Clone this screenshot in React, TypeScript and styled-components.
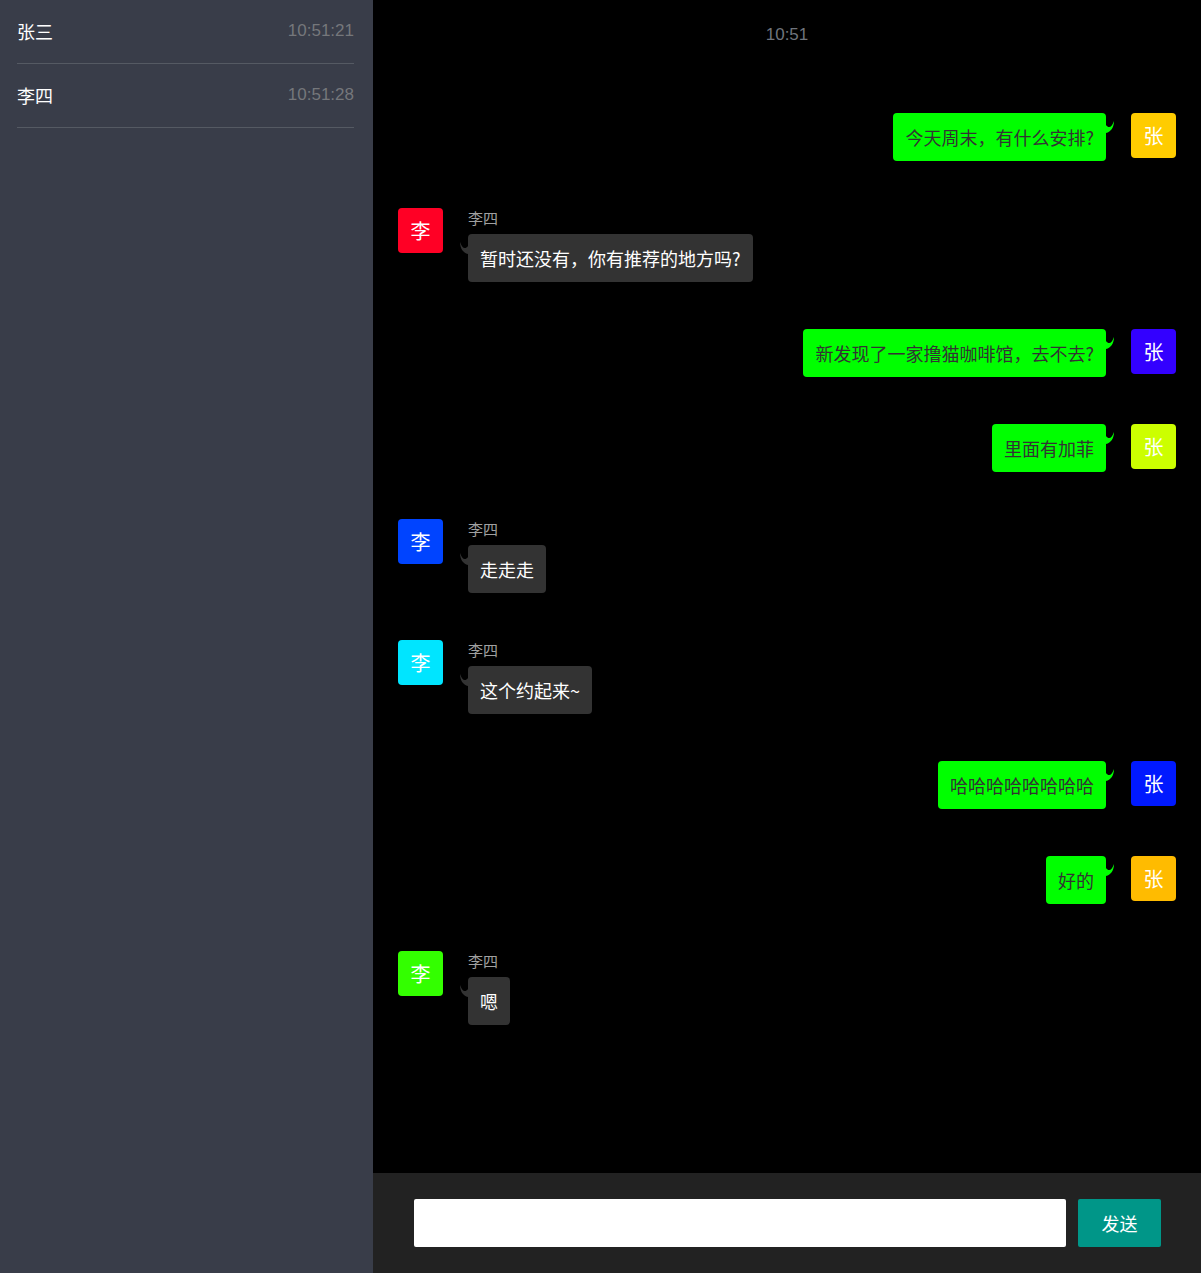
import React from "react";
import styled, { createGlobalStyle } from "styled-components";

const Global = createGlobalStyle`
  html, body { margin: 0; padding: 0; background: #000; }
  body { font-family: "Liberation Sans", "Noto Sans CJK SC", sans-serif; overflow: hidden; }
  * { box-sizing: border-box; }
`;

const Page = styled.div`
  display: flex;
  width: 1201px;
  height: 1273px;
`;

const Sidebar = styled.aside`
  width: 373px;
  flex: none;
  background: #393d49;
`;

const Contact = styled.div`
  display: flex;
  align-items: center;
  justify-content: space-between;
  height: 64px;
  margin: 0 19px 0 17px;
  border-bottom: 1px solid #555a63;
  padding-bottom: 1px;
`;

const ContactName = styled.span`
  color: #fff;
  font-size: 18px;
  font-family: "Noto Sans CJK SC", sans-serif;
`;

const ContactTime = styled.span`
  color: #75777b;
  font-size: 17px;
  font-family: "Liberation Sans", sans-serif;
`;

const Main = styled.main`
  flex: 1;
  display: flex;
  flex-direction: column;
  min-width: 0;
`;

const Messages = styled.div`
  flex: 1;
  background: #000;
  padding: 24px 25px 0 25px;
  display: flex;
  flex-direction: column;
`;

const TimeStamp = styled.div`
  text-align: center;
  color: #6f747c;
  font-size: 17px;
  line-height: 22px;
  margin-bottom: 67px;
`;

const List = styled.div`
  display: flex;
  flex-direction: column;
  gap: 47px;
`;

const Row = styled.div<{ $mine: boolean }>`
  display: flex;
  flex-direction: ${(p) => (p.$mine ? "row-reverse" : "row")};
  align-items: flex-start;
  gap: 25px;
`;

const Avatar = styled.div<{ $color: string }>`
  width: 45px;
  height: 45px;
  flex: none;
  border-radius: 4px;
  background: ${(p) => p.$color};
  color: #fff;
  display: flex;
  align-items: center;
  justify-content: center;
  font-size: 20px;
  font-family: "Noto Sans CJK SC", sans-serif;
`;

const Body = styled.div<{ $mine: boolean }>`
  display: flex;
  flex-direction: column;
  align-items: ${(p) => (p.$mine ? "flex-end" : "flex-start")};
`;

const Name = styled.div`
  color: #a0a0a0;
  font-size: 15px;
  line-height: 20px;
  margin-bottom: 6px;
  font-family: "Noto Sans CJK SC", sans-serif;
`;

const Bubble = styled.div<{ $mine: boolean }>`
  position: relative;
  min-height: 48px;
  background: ${(p) => (p.$mine ? "#00ff00" : "#333333")};
  color: ${(p) => (p.$mine ? "#333333" : "#ffffff")};
  font-size: 18px;
  line-height: 24px;
  padding: 12px 12px;
  border-radius: 4px;
  font-family: "Noto Sans CJK SC", sans-serif;
  white-space: nowrap;
`;

const Tail = styled.svg<{ $mine: boolean }>`
  position: absolute;
  top: 8px;
  width: 8px;
  height: 12px;
  ${(p) => (p.$mine ? "right: -8px;" : "left: -8px; transform: scaleX(-1);")}
`;

const Footer = styled.div`
  height: 100px;
  background: #222222;
  display: flex;
  align-items: center;
  padding: 0 40px 0 41px;
  gap: 12px;
`;

const Input = styled.input`
  flex: 1;
  height: 48px;
  border: none;
  border-radius: 2px;
  background: #fff;
  outline: none;
  padding: 0 10px;
  font-size: 16px;
`;

const SendButton = styled.button`
  width: 83px;
  height: 48px;
  border: none;
  border-radius: 2px;
  background: #009688;
  color: #fff;
  font-size: 18px;
  font-family: "Noto Sans CJK SC", sans-serif;
  cursor: pointer;
`;

type Msg = { mine: boolean; text: string; color: string };

const messages: Msg[] = [
  { mine: true, text: "今天周末，有什么安排?", color: "#ffcc00" },
  { mine: false, text: "暂时还没有，你有推荐的地方吗?", color: "#ff0025" },
  { mine: true, text: "新发现了一家撸猫咖啡馆，去不去?", color: "#3300ff" },
  { mine: true, text: "里面有加菲", color: "#ccff00" },
  { mine: false, text: "走走走", color: "#0044ff" },
  { mine: false, text: "这个约起来~", color: "#00e5ff" },
  { mine: true, text: "哈哈哈哈哈哈哈哈", color: "#0019ff" },
  { mine: true, text: "好的", color: "#ffbb00" },
  { mine: false, text: "嗯", color: "#33ff00" },
];

export default function App() {
  return (
    <>
      <Global />
      <Page>
        <Sidebar>
          <Contact>
            <ContactName>张三</ContactName>
            <ContactTime>10:51:21</ContactTime>
          </Contact>
          <Contact>
            <ContactName>李四</ContactName>
            <ContactTime>10:51:28</ContactTime>
          </Contact>
        </Sidebar>
        <Main>
          <Messages>
            <TimeStamp>10:51</TimeStamp>
            <List>
              {messages.map((m, i) => (
                <Row key={i} $mine={m.mine}>
                  <Avatar $color={m.color}>{m.mine ? "张" : "李"}</Avatar>
                  <Body $mine={m.mine}>
                    {!m.mine && <Name>李四</Name>}
                    <Bubble $mine={m.mine}>
                      <Tail $mine={m.mine} viewBox="0 0 8 12">
                        <path
                          d="M0 4 C3 8 6 6 8 0 C8 6 5 11 0 12 Z"
                          fill={m.mine ? "#00ff00" : "#333333"}
                        />
                      </Tail>
                      {m.text}
                    </Bubble>
                  </Body>
                </Row>
              ))}
            </List>
          </Messages>
          <Footer>
            <Input />
            <SendButton>发送</SendButton>
          </Footer>
        </Main>
      </Page>
    </>
  );
}
